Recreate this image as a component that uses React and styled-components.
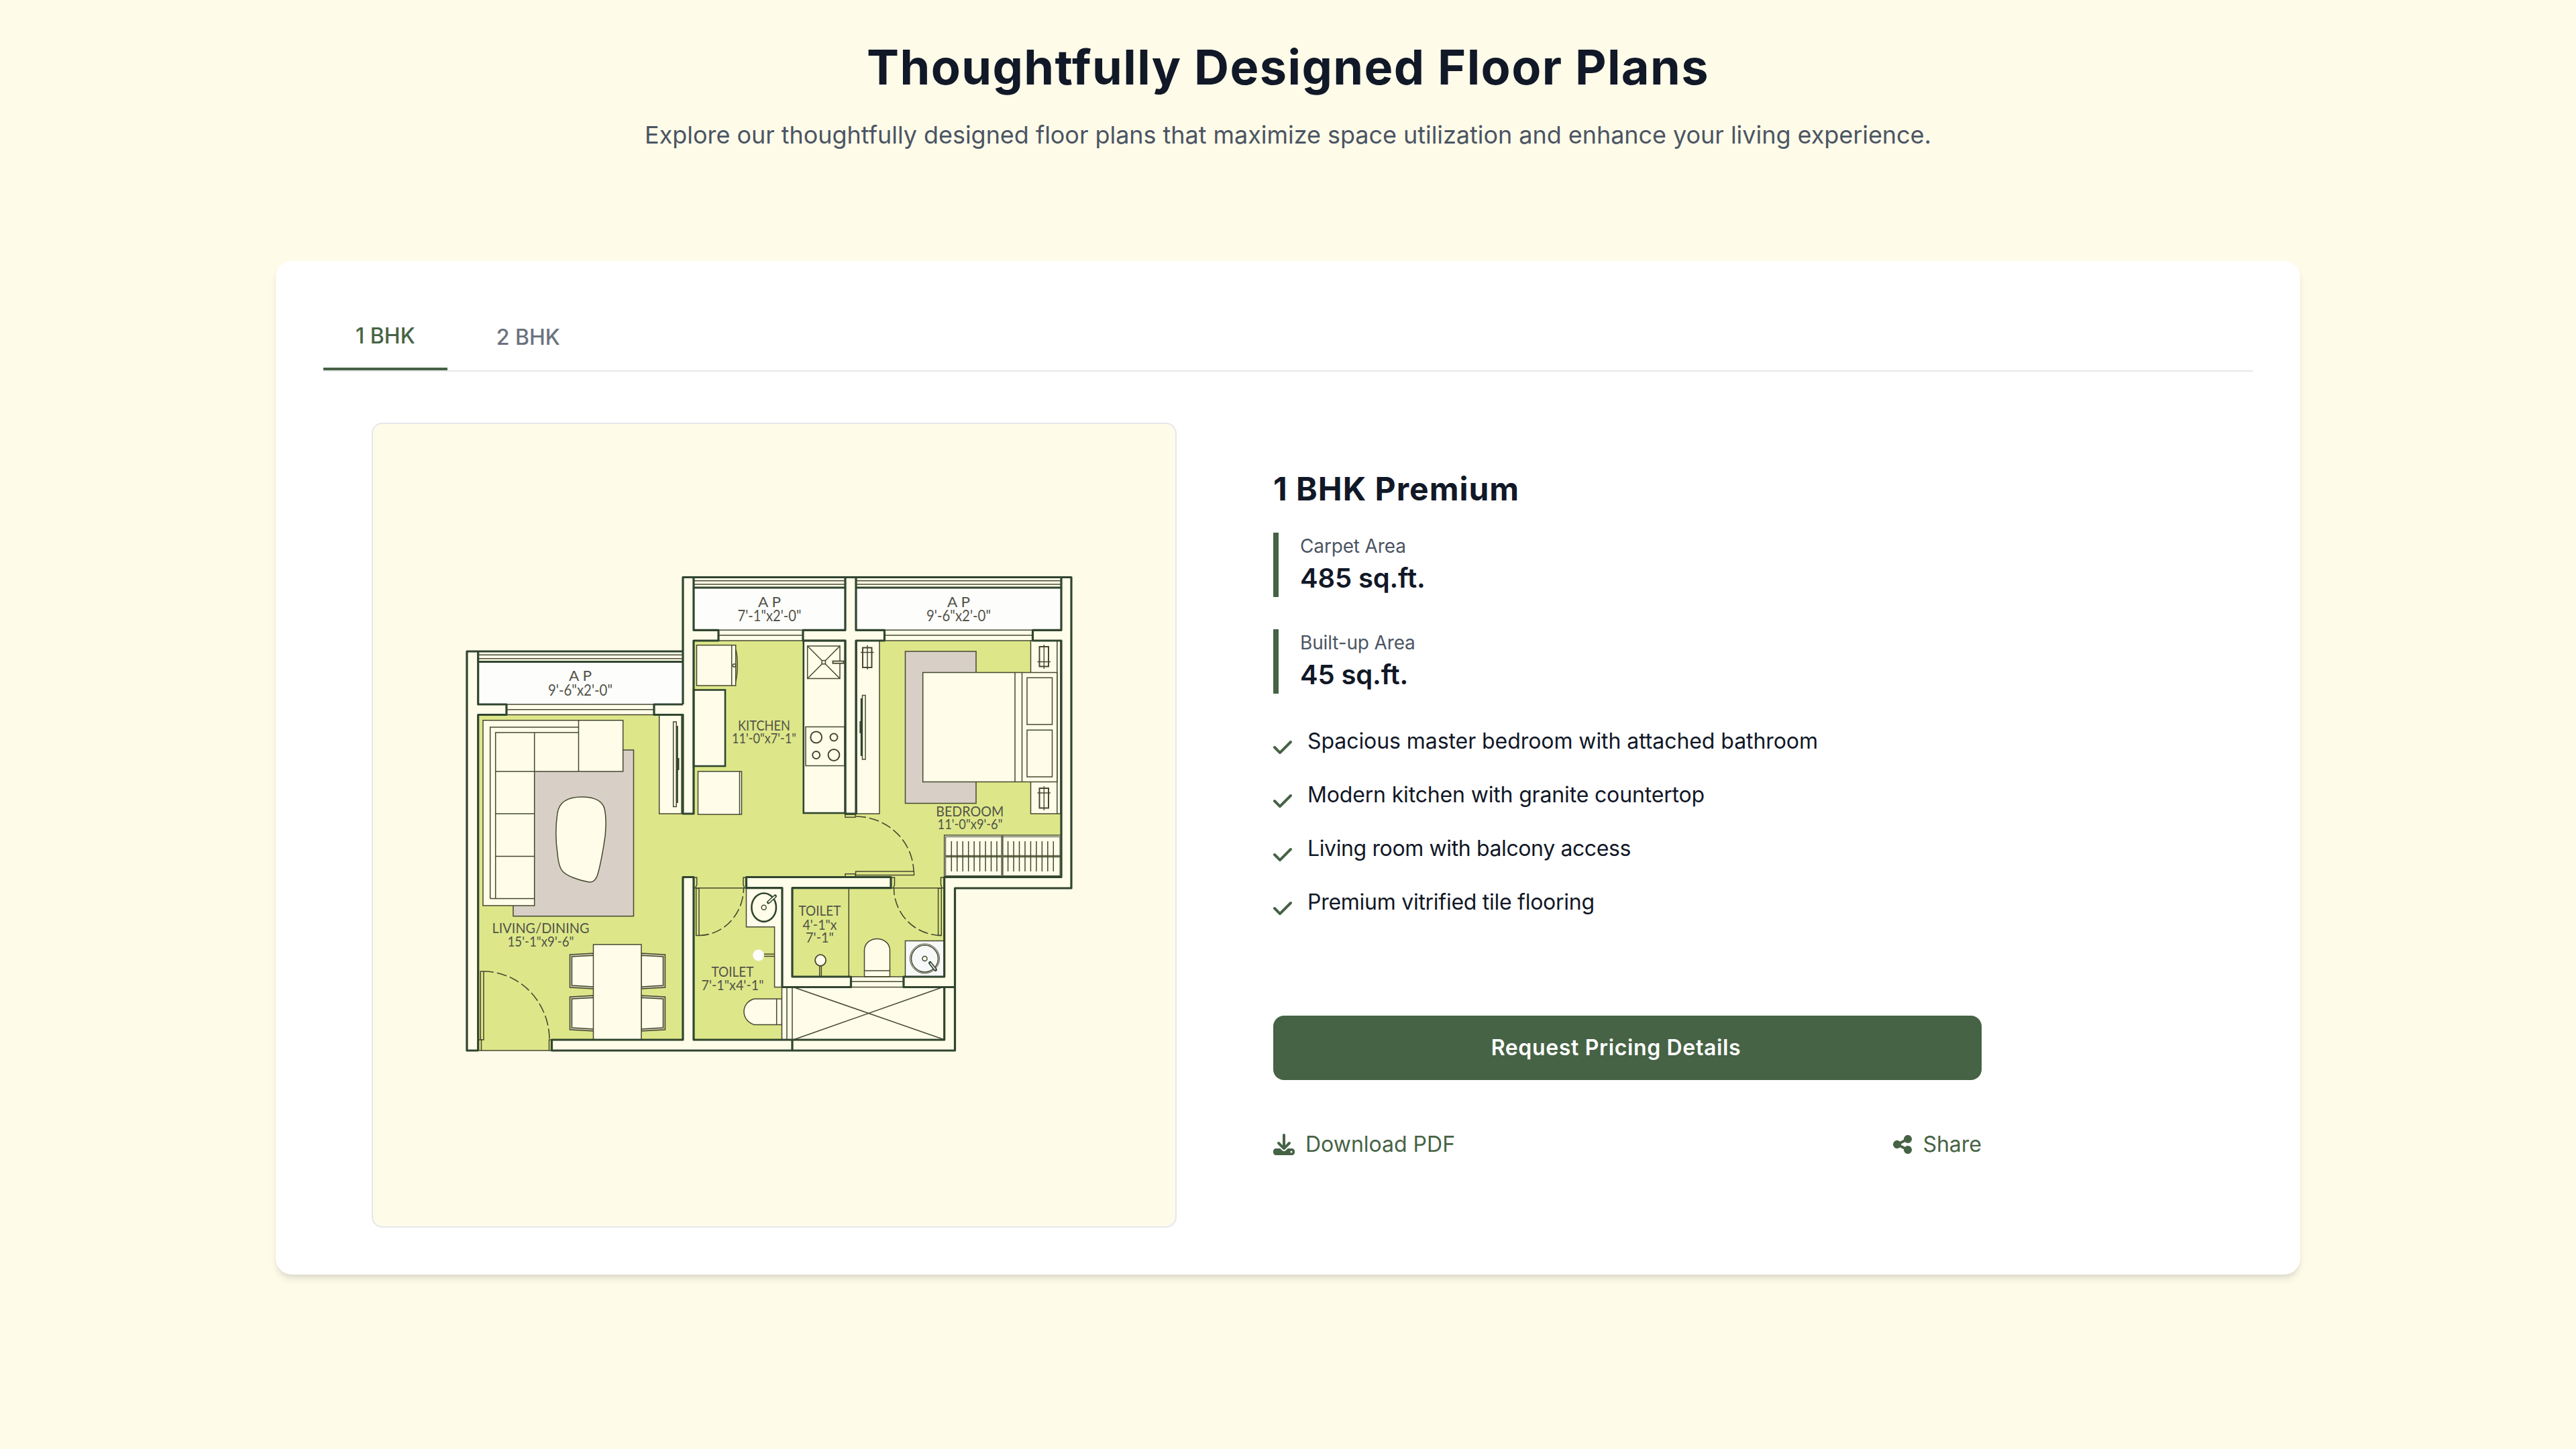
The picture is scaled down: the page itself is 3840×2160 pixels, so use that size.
import React, { useState } from 'react';
import styled, { createGlobalStyle } from 'styled-components';
import { FaCheck, FaDownload, FaShareNodes } from 'react-icons/fa6';

const color = {
  page: '#fffbe9',
  green: '#466345',
  ink: '#111827',
  muted: '#4b5563',
  tab: '#6b7280',
  line: '#e5e7eb',
};

const GlobalStyle = createGlobalStyle`
  *, *::before, *::after { box-sizing: border-box; }
  body {
    margin: 0;
    background: ${color.page};
    color: ${color.ink};
    font-family: Inter, "Liberation Sans", sans-serif;
    font-size: 32px;
    line-height: 48px;
  }
  h2, h3, p, ul, dl, dt, dd { margin: 0; padding: 0; }
  button { font: inherit; border: 0; background: none; cursor: pointer; }
`;

const Section = styled.section`
  display: flex;
  flex-direction: column;
  align-items: center;
  min-height: 2160px;
  padding-top: 55px;
`;

const Header = styled.header`
  display: flex;
  flex-direction: column;
  align-items: center;
  gap: 28px;
  margin-bottom: 160px;
`;

const Title = styled.h2`
  font-size: 72px;
  line-height: 90px;
  font-weight: 700;
  letter-spacing: 1.4px;
  white-space: nowrap;
`;

const Subtitle = styled.p`
  font-size: 36px;
  line-height: 56px;
  letter-spacing: -0.045px;
  color: ${color.muted};
  white-space: nowrap;
`;

const Card = styled.div`
  width: 3018px;
  height: 1511px;
  padding: 72px 71px;
  border-radius: 24px;
  background: #fff;
  box-shadow: 0 8px 12px -2px rgba(0, 0, 0, 0.1), 0 4px 8px -4px rgba(0, 0, 0, 0.1);
`;

const Tabs = styled.div`
  display: flex;
  gap: 25px;
  height: 93px;
  border-bottom: 2px solid ${color.line};
`;

const Tab = styled.button`
  display: flex;
  align-items: center;
  height: 91px;
  padding: 0 48px 7px;
  font-weight: 500;
  color: ${(p) => (p.$active ? color.green : color.tab)};
  border-bottom: ${(p) => (p.$active ? `4px solid ${color.green}` : '0')};
`;

const Body = styled.div`
  display: flex;
  gap: 144px;
  padding: 76px 72px 0;
`;

const PlanFrame = styled.div`
  flex: none;
  width: 1200px;
  height: 1200px;
  border: 2px solid ${color.line};
  border-radius: 16px;
  background: ${color.page};
  overflow: hidden;
`;

const PlanDrawing = styled.svg`
  display: block;
  width: 100%;
  height: 100%;
`;

const PlanText = styled.text`
  font-family: Lato, "Liberation Sans", sans-serif;
  font-size: ${(p) => p.$size}px;
  fill: #535448;
  text-anchor: middle;
`;

const Details = styled.div`
  display: flex;
  flex-direction: column;
  width: 1056px;
  padding-top: 67px;
`;

const PlanName = styled.h3`
  margin-bottom: 33px;
  font-size: 48px;
  line-height: 64px;
  font-weight: 700;
  letter-spacing: 1px;
`;

const Stats = styled.dl`
  display: flex;
  flex-direction: column;
  gap: 48px;
  margin-bottom: 47px;
`;

const Stat = styled.div`
  padding-left: 32px;
  border-left: 8px solid ${color.green};
`;

const StatLabel = styled.dt`
  font-size: 28px;
  line-height: 40px;
  letter-spacing: -0.15px;
  color: ${color.muted};
`;

const StatValue = styled.dd`
  font-size: 40px;
  line-height: 56px;
  font-weight: 600;
  letter-spacing: -0.15px;
`;

const Features = styled.ul`
  display: flex;
  flex-direction: column;
  gap: 32px;
  margin-bottom: 145px;
  list-style: none;
`;

const Feature = styled.li`
  display: flex;
  align-items: flex-start;
  gap: 23px;
  height: 48px;
  letter-spacing: ${(p) => p.$tracking}px;
`;

const CheckIcon = styled(FaCheck)`
  flex: none;
  width: 28px;
  height: 32px;
  margin-top: 17px;
  color: ${color.green};
`;

const PrimaryButton = styled.button`
  height: 96px;
  padding: 0 40px 0 6px;
  border-radius: 16px;
  background: ${color.green};
  color: #fff;
  font-weight: 600;
  letter-spacing: 0.65px;
`;

const Links = styled.div`
  display: flex;
  justify-content: space-between;
  margin-top: 72px;
`;

const LinkButton = styled.button`
  display: flex;
  align-items: center;
  gap: 16px;
  padding: 0;
  color: ${color.green};

  svg {
    width: ${(p) => p.$iconWidth}px;
    height: 32px;
  }
`;

const plans = [
  {
    tab: '1 BHK',
    name: '1 BHK Premium',
    carpet: '485 sq.ft.',
    builtUp: '45 sq.ft.',
    features: [
      ['Spacious master bedroom with attached bathroom', -0.07],
      ['Modern kitchen with granite countertop', -0.16],
      ['Living room with balcony access', -0.38],
      ['Premium vitrified tile flooring', -0.27],
    ],
  },
  { tab: '2 BHK' },
];

const labels = [
  [865, 1015, 34, 'A P', 21.5],
  [865, 1037, 96, `9'-6"x2'-0"`, 22.5],
  [1147, 904.5, 34, 'A P', 21.5],
  [1147, 926, 95, `7'-1"x2'-0"`, 22.5],
  [1429, 904.5, 34, 'A P', 21.5],
  [1429, 926, 96, `9'-6"x2'-0"`, 22.5],
  [1139, 1089, 78, 'KITCHEN', 21],
  [1139, 1108, 96, `11'-0"x7'-1"`, 21],
  [806, 1391, 145, 'LIVING/DINING', 21],
  [806, 1411, 99, `15'-1"x9'-6"`, 21],
  [1445.7, 1217, 101, 'BEDROOM', 21],
  [1446, 1236, 97, `11'-0"x9'-6"`, 21],
  [1092, 1456, 63, 'TOILET', 22],
  [1092, 1476.3, 93, `7'-1"x4'-1"`, 22],
  [1222, 1365, 63, 'TOILET', 22],
  [1222, 1385.6, 51, `4'-1"x`, 21.5],
  [1222, 1405, 42, `7'-1"`, 21.5],
];

const WALL = '#30452f';
const THIN = '#45482f';
const CREAM = '#fffdea';
const RUG = '#d8cfc6';

const Rect = ({ x1, y1, x2, y2, ...rest }) => (
  <rect x={x1} y={y1} width={x2 - x1} height={y2 - y1} {...rest} />
);

const Lamp = ({ y, bar }) => (
  <g strokeWidth="2">
    <Rect x1={1549.5} y1={y} x2={1563} y2={y + 29.5} />
    <path d={`M1556.3 ${y - 3}V${y + 33}M1546.5 ${bar}H1566`} strokeWidth="1.4" />
  </g>
);

function FloorPlan() {
  const hangers = [1418.3, 1502.6].flatMap((s) => Array.from({ length: 9 }, (_, i) => s + i * 8.46));
  return (
    <PlanDrawing viewBox="556 632 1196 1196">
      {/* shell and green floors */}
      <path
        fill={CREAM}
        d="M696 971H1018V860.5H1597V1324H1423.5V1566H696Z"
      />
      <path
        fill="#dde78a"
        d="M713 1065H1018V1213H1034V955H1260V1213H1276V955H1582V1307.5H1408V1456H1181V1324H1328V1307.5H1112.5V1324H1166V1550H1034V1307.5H1018V1550H822.5V1566H713Z"
      />
      <g fill="#fdfdfc">
        <Rect x1={713} y1={987} x2={1018} y2={1050} />
        <Rect x1={1034} y1={876} x2={1260} y2={939} />
        <Rect x1={1276} y1={876} x2={1582} y2={939} />
      </g>

      <g stroke={THIN} strokeWidth="1.5" fill={CREAM}>
        {/* balcony rails and windows */}
        <path
          fill="none"
          d="M713 976.3H1018M713 981.7H1018M1034 865.7H1260M1034 871H1260M1276 865.7H1582M1276 871H1582
             M755 1050H975M755 1057.7H975M755 1065.5H975M1071 939.3H1197M1071 947H1197M1071 955H1197
             M1318 939.3H1539M1318 947H1539M1318 955H1539"
        />

        {/* living room */}
        <Rect x1={765} y1={1118} x2={944.5} y2={1365.7} fill={RUG} />
        <path d="M720 1073.7H928.7V1150H796.7V1350H720Z" />
        <path
          fill="none"
          d="M730.7 1339.5V1084H862.5M738.7 1339.5V1092H862.5M862.5 1073.7V1150M796.7 1092V1150H738.7M738.7 1213H796.7M738.7 1276.5H796.7M730.7 1339.5H796.7"
        />
        <path d="M867 1188C884 1188 897 1192 901 1205C904 1218 904 1240 900 1260C897 1278 893 1298 890 1306C887 1314 882 1316 876 1314.5C862 1312 846 1306 840 1300C834 1295 832 1284 831 1272C828 1252 828 1232 831 1212C834 1193 849 1188 867 1188Z" />
        <Rect x1={982.7} y1={1065.5} x2={1016} y2={1213} />
        <Rect x1={1003.7} y1={1076} x2={1008.2} y2={1202.5} />
        <path d="M1009.6 1082V1197M1011.3 1130V1148" stroke={WALL} strokeWidth="2.4" />

        {/* dining set */}
        {[0, 63].map((dy) => (
          <g key={dy} transform={`translate(0 ${dy})`}>
            <path d="M849.5 1423L885 1421V1474L849.5 1472Z" fill="#c9c9ae" />
            <path d="M852.5 1426L885 1424.2V1471L852.5 1469Z" />
            <path d="M991.5 1423L956 1421V1474L991.5 1472Z" fill="#c9c9ae" />
            <path d="M988.5 1426L956 1424.2V1471L988.5 1469Z" />
          </g>
        ))}
        <Rect x1={884.5} y1={1408} x2={956} y2={1550} />

        {/* kitchen */}
        <Rect x1={1038.5} y1={961.7} x2={1096.7} y2={1022} />
        <path d="M1090.7 961.7V1022M1096.7 968C1100 978 1100 1004 1096.7 1016" fill="none" />
        <circle cx="1094.5" cy="992" r="2.2" />
        <Rect x1={1034} y1={1028.5} x2={1081} y2={1142} stroke={WALL} strokeWidth="2.6" />
        <Rect x1={1040.5} y1={1150} x2={1105.5} y2={1214} />
        <path d="M1102.5 1150V1214" />
        <Rect x1={1197.8} y1={955} x2={1260} y2={1212} stroke={WALL} strokeWidth="2.6" />
        <Rect x1={1203.7} y1={963} x2={1252} y2={1011.5} />
        <path d="M1203.7 963L1252 1011.5M1252 963L1203.7 1011.5" />
        <Rect x1={1225.2} y1={984.6} x2={1230.4} y2={989.8} />
        <Rect x1={1241.5} y1={985.5} x2={1257.5} y2={988.8} strokeWidth="1.8" />
        <Rect x1={1201} y1={1083.5} x2={1259} y2={1141.5} />
        <g strokeWidth="2">
          <circle cx="1216.7" cy="1099" r="8.4" />
          <circle cx="1243" cy="1099" r="5.5" />
          <circle cx="1216.7" cy="1125.5" r="5.5" />
          <circle cx="1243" cy="1125.5" r="8.4" />
        </g>

        {/* bedroom */}
        <Rect x1={1277} y1={955} x2={1311} y2={1213} />
        <Rect x1={1286} y1={965.5} x2={1299.5} y2={995} strokeWidth="2" />
        <path d="M1293 962V998M1283 972.5H1302.5" />
        <Rect x1={1285.5} y1={1036.5} x2={1290} y2={1132} />
        <path d="M1284 1041V1127M1282.6 1075V1093" stroke={WALL} strokeWidth="2.4" />
        <Rect x1={1349.5} y1={971} x2={1455} y2={1197.5} fill={RUG} />
        <Rect x1={1536.5} y1={955} x2={1581} y2={1213} />
        <path d="M1575.8 955V1213" />
        <Rect x1={1375.7} y1={1002.5} x2={1575.8} y2={1165.5} />
        <path d="M1513 1002.5V1165.5M1523.5 1002.5V1165.5" />
        <Rect x1={1531} y1={1010.3} x2={1568.5} y2={1080} />
        <Rect x1={1531} y1={1088.3} x2={1568.5} y2={1158} />
        <Lamp y={964} bar={986.5} />
        <Lamp y={1175} bar={1182} />
        <Rect x1={1407.7} y1={1245} x2={1582} y2={1307.5} />
        <Rect x1={1409.7} y1={1247.5} x2={1580} y2={1305.5} strokeWidth="1" />
        <path d="M1409 1276.5H1581M1494 1246V1307" stroke="#62694a" strokeWidth="3.4" />
        <path d={hangers.map((x) => `M${x} 1254V1299`).join('')} />

        {/* first toilet */}
        <path d="M1112.5 1324H1165.7V1471.5H1154.6V1381.7H1112.5Z" />
        <path d="M1138 1422.3H1154.6M1138 1425.5H1154.6" />
        <circle cx="1130.7" cy="1424" r="8.4" fill="#fdfdfc" stroke="none" />
        <path d="M1165.5 1489H1124C1104 1495 1104 1521 1124 1527.5H1165.5ZM1157.7 1489V1527.5" />
        <ellipse cx="1138.7" cy="1352.7" rx="18.3" ry="21.2" stroke={WALL} strokeWidth="2.6" />
        <circle cx="1138.7" cy="1352.7" r="3.5" />
        <path d="M1145.5 1345L1155.5 1336" stroke={WALL} strokeWidth="5" strokeLinecap="round" />
        <path d="M1146 1344.5L1155 1336.5" stroke={CREAM} strokeWidth="1.8" strokeLinecap="round" />

        {/* second toilet */}
        <path d="M1265.3 1324V1456" />
        <path d="M1221.8 1440V1456M1224.4 1440V1456" />
        <ellipse cx="1223.1" cy="1431.5" rx="8" ry="8.3" strokeWidth="1.8" />
        <path d="M1288.5 1456V1416C1290 1394 1325 1394 1326.5 1416V1456ZM1288.5 1447H1326.5" />
        <Rect x1={1349.5} y1={1402.5} x2={1407.5} y2={1456} fill="#f7f8f8" />
        <circle cx="1378.5" cy="1429" r="22" fill="none" strokeWidth="1" />
        <circle cx="1378.5" cy="1429" r="20" fill="none" />
        <circle cx="1378.5" cy="1429" r="3.5" />
        <path d="M1386.5 1435.5L1394.5 1445.5" stroke={WALL} strokeWidth="5" strokeLinecap="round" />
        <path d="M1387 1436L1394 1445" stroke="#f7f8f8" strokeWidth="1.5" strokeLinecap="round" />

        {/* duct */}
        <Rect x1={1165.5} y1={1471.5} x2={1181} y2={1550} />
        <path d="M1173 1471.5V1550M1184 1472L1407 1549.5M1404 1472L1184 1549.5" />
        <path d="M1268.5 1456H1347M1268.5 1463.3H1347M1268.5 1471.5H1347" />

        {/* door leaves and jambs */}
        <Rect x1={716.3} y1={1448} x2={721} y2={1550} fill="none" />
        <Rect x1={1037.7} y1={1324} x2={1042} y2={1394.5} fill="none" />
        <Rect x1={1398.6} y1={1324} x2={1403.3} y2={1394.5} fill="none" />
        <Rect x1={1275.6} y1={1299} x2={1362.5} y2={1304.5} fill="none" />
        <Rect x1={1260} y1={1214} x2={1275} y2={1218.3} fill="none" />
        <Rect x1={1260} y1={1302.7} x2={1275} y2={1307} fill="none" />
        <path
          fill="none"
          d="M713 1566H822M1034 1323.7H1112M1328 1323.7H1407M713 1550H717.5V1566M822 1550H818.5V1566
             M1034 1308H1038.7V1319L1037 1323M1112 1308H1108V1319L1109.5 1323M1329 1308H1333.5V1319L1332 1323M1407 1308H1402.5V1319L1404 1323"
        />
        <path
          fill="none"
          strokeWidth="1.6"
          strokeDasharray="15 5"
          d="M721 1448A99 102 0 0 1 819 1550M1042 1394.5A67 71 0 0 0 1108.5 1324M1403 1394.5A71 71 0 0 1 1332.5 1324M1276 1217A87 84 0 0 1 1362 1299"
        />
      </g>

      {/* masonry outlines */}
      <path
        fill="none"
        stroke={WALL}
        strokeWidth="3.2"
        strokeLinejoin="round"
        d="M713 1566H696V971H1018M1018 1050V860.5H1597V1324H1423.5V1566H822.5V1550H1018V1307.5H1034V1550H1407.7V1471.5
           M712.7 971V1050H755V1065.5H712.7V1566M713 986.5H1018
           M1018 1050H975V1065.5H1018V1213H1034V955H1071V939.3H1034V860.5M1034 876H1260M1276 876H1582
           M1260 860.5V939.3H1197V955H1260V1213H1276V955H1318.5V939.3H1276V860.5
           M1582 860.5V939.3H1539.5V955H1582V1307.5H1407.7V1456H1347V1471.5H1423.5
           M1166 1471.5H1268.5V1456H1181V1323.7H1328V1307.5H1112.5V1323.7H1166V1471.5M1181 1550V1566"
      />
      {labels.map(([x, y, width, text, size]) => (
        <PlanText key={`${x}-${y}`} x={x} y={y} $size={size} textLength={width} lengthAdjust="spacingAndGlyphs">
          {text}
        </PlanText>
      ))}
    </PlanDrawing>
  );
}

export default function App() {
  const [active, setActive] = useState(0);
  const plan = plans[0];
  return (
    <>
      <GlobalStyle />
      <Section>
        <Header>
          <Title>Thoughtfully Designed Floor Plans</Title>
          <Subtitle>
            Explore our thoughtfully designed floor plans that maximize space utilization and enhance your living
            experience.
          </Subtitle>
        </Header>
        <Card>
          <Tabs>
            {plans.map((p, i) => (
              <Tab key={p.tab} $active={i === active} onClick={() => setActive(i)}>
                {p.tab}
              </Tab>
            ))}
          </Tabs>
          <Body>
            <PlanFrame>
              <FloorPlan />
            </PlanFrame>
            <Details>
              <PlanName>{plan.name}</PlanName>
              <Stats>
                <Stat>
                  <StatLabel>Carpet Area</StatLabel>
                  <StatValue>{plan.carpet}</StatValue>
                </Stat>
                <Stat>
                  <StatLabel>Built-up Area</StatLabel>
                  <StatValue>{plan.builtUp}</StatValue>
                </Stat>
              </Stats>
              <Features>
                {plan.features.map(([text, tracking]) => (
                  <Feature key={text} $tracking={tracking}>
                    <CheckIcon />
                    {text}
                  </Feature>
                ))}
              </Features>
              <PrimaryButton>Request Pricing Details</PrimaryButton>
              <Links>
                <LinkButton $iconWidth={32}>
                  <FaDownload />
                  Download PDF
                </LinkButton>
                <LinkButton $iconWidth={28}>
                  <FaShareNodes />
                  Share
                </LinkButton>
              </Links>
            </Details>
          </Body>
        </Card>
      </Section>
    </>
  );
}
